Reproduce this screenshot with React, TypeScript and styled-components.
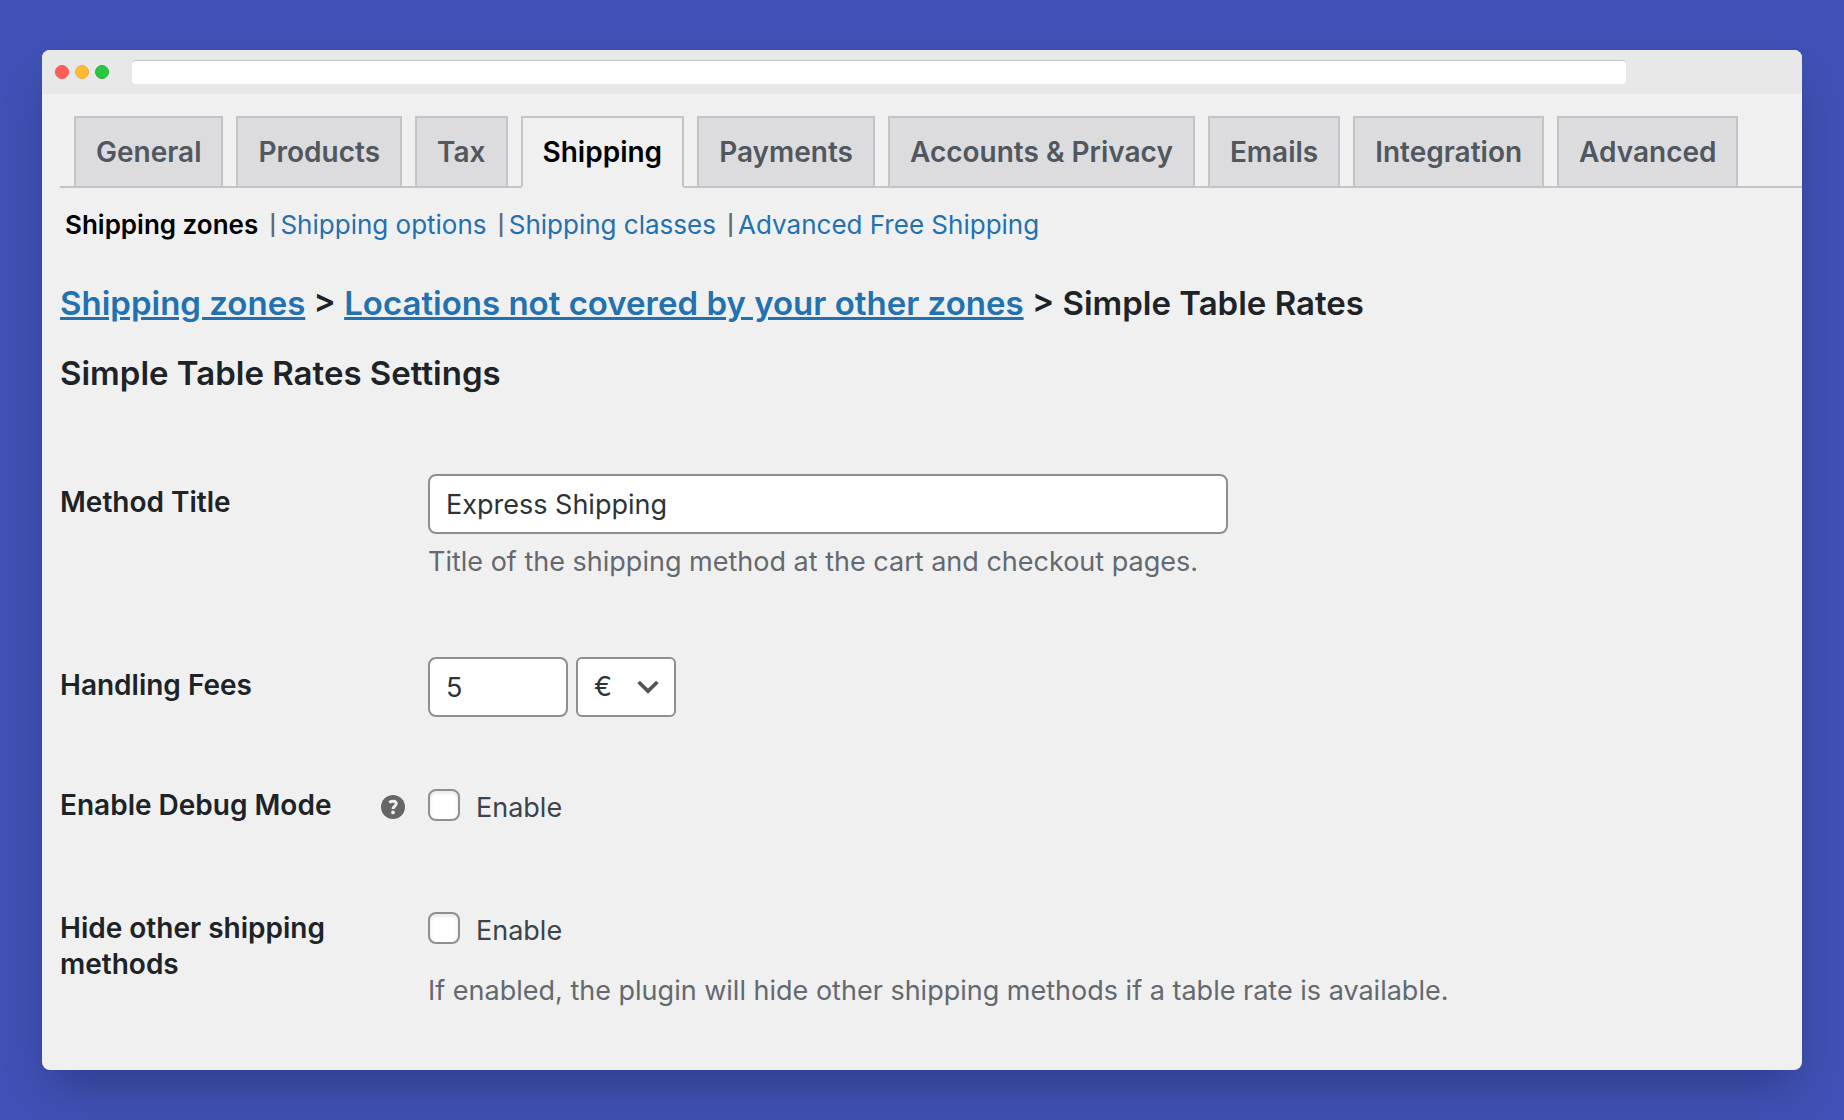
import React from "react";
import styled, { createGlobalStyle } from "styled-components";

const GlobalStyle = createGlobalStyle`
  *, *::before, *::after { box-sizing: border-box; }
  body {
    margin: 0;
    background: #3f51b5;
    color: #3c434a;
    font-family: Inter, "Liberation Sans", sans-serif;
    font-size: 27px;
    line-height: 36px;
  }
`;

const Page = styled.div`
  display: flex;
  min-height: 100vh;
  padding: 50px 42px;
`;

const BrowserWindow = styled.div`
  flex: 1;
  min-width: 0;
  overflow: hidden;
  border-radius: 8px;
  background: #f0f0f0;
  box-shadow: 0 24px 44px -8px rgba(0, 0, 0, 0.23);
`;

const TitleBar = styled.div`
  display: flex;
  align-items: center;
  height: 44px;
  padding: 0 176px 0 13px;
  background: #e8e8e8;
`;

const Lights = styled.div`
  display: flex;
  gap: 6px;
  margin-right: 23px;
`;

const Light = styled.span<{ $fill: string; $edge: string }>`
  width: 14px;
  height: 14px;
  border: 1px solid ${(p) => p.$edge};
  border-radius: 50%;
  background: ${(p) => p.$fill};
`;

const Address = styled.input`
  flex: 1;
  min-width: 0;
  height: 24px;
  padding: 0 8px;
  border: 0;
  border-top: 1px solid #c4c4c4;
  border-radius: 4px;
  background: #fff;
  outline: none;
`;

const Content = styled.main`
  padding: 22px 0 40px 18px;
`;

const Tabs = styled.nav`
  display: flex;
  gap: 13px;
  padding-left: 14px;
  border-bottom: 2px solid #c3c4c7;
`;

const Tab = styled.a<{ $active?: boolean }>`
  margin-bottom: -2px;
  padding: 17px 20px;
  border: 2px solid #c3c4c7;
  border-bottom-color: ${(p) => (p.$active ? "#f0f0f0" : "#c3c4c7")};
  background: ${(p) => (p.$active ? "#f0f0f0" : "#dcdcde")};
  color: ${(p) => (p.$active ? "#000" : "#50575e")};
  font-size: 28px;
  font-weight: 600;
  line-height: 34px;
  text-decoration: none;
  white-space: nowrap;
`;

const Sections = styled.ul`
  display: flex;
  margin: 19px 0 0;
  padding: 0 0 0 5px;
  list-style: none;
  color: #646970;
  font-size: 26px;
`;

const Section = styled.li`
  display: flex;
  & + &::before {
    content: "|";
    margin: 0 4px 0 11px;
    font-size: 20px;
    font-weight: 600;
  }
`;

const SectionLink = styled.a<{ $active?: boolean }>`
  color: ${(p) => (p.$active ? "#000" : "#2271b1")};
  font-weight: ${(p) => (p.$active ? 600 : 400)};
  text-decoration: none;
`;

const Heading = styled.h2`
  margin: 0 0 22px;
  color: #1d2327;
  font-size: 33px;
  font-weight: 600;
  line-height: 48px;
`;

const Crumbs = styled(Heading)`
  margin-top: 36px;
`;

const Crumb = styled.a`
  color: #2271b1;
`;

const Form = styled.form`
  display: grid;
  gap: 70px;
  padding-top: 55px;
`;

const Row = styled.div`
  display: grid;
  grid-template-columns: 345px minmax(0, 1fr);
  column-gap: 23px;
`;

const Head = styled.div<{ $inset?: boolean }>`
  display: flex;
  align-items: flex-start;
  justify-content: space-between;
  padding-top: ${(p) => (p.$inset ? 10 : 0)}px;
  color: #1d2327;
  font-size: 28px;
  font-weight: 600;
`;

const HeadLabel = styled.label`
  max-width: 290px;
`;

const Help = styled.button`
  display: flex;
  height: 40px;
  align-items: center;
  padding: 0;
  border: 0;
  background: none;
`;

const Field = styled.div`
  min-width: 0;
`;

const Controls = styled.div`
  display: flex;
  gap: 8px;
`;

const TextInput = styled.input<{ $width: number }>`
  width: ${(p) => p.$width}px;
  max-width: 100%;
  height: 60px;
  padding: 0 16px;
  border: 2px solid #8c8f94;
  border-radius: 8px;
  background: #fff;
  color: #2c3338;
  font: inherit;
`;

const SelectWrap = styled.div`
  display: grid;
  width: 100px;
  align-items: center;
  & > * { grid-area: 1 / 1; }
  & > svg {
    justify-self: end;
    margin-right: 17px;
    pointer-events: none;
  }
`;

const Select = styled.select`
  width: 100%;
  height: 60px;
  padding: 0 40px 0 16px;
  border: 2px solid #8c8f94;
  border-radius: 6px;
  appearance: none;
  background: #fff;
  color: #2c3338;
  font: inherit;
`;

const CheckLabel = styled.label`
  display: flex;
  width: fit-content;
  gap: 16px;
  margin-bottom: 13px;
  padding-top: 2px;
  line-height: 38px;
`;

const Checkbox = styled.input`
  width: 32px;
  height: 32px;
  margin: 0;
  border: 2px solid #8c8f94;
  border-radius: 8px;
  appearance: none;
  background: #fff;
  box-shadow: inset 0 2px 4px rgba(0, 0, 0, 0.1);
  &:checked { background: #2271b1; }
`;

const Description = styled.p<{ $top: number; $bottom?: number }>`
  margin: ${(p) => p.$top}px 0 ${(p) => p.$bottom ?? 0}px;
  color: #646970;
`;

const tabs = [
  "General", "Products", "Tax", "Shipping", "Payments",
  "Accounts & Privacy", "Emails", "Integration", "Advanced",
];
const sections = ["Shipping zones", "Shipping options", "Shipping classes", "Advanced Free Shipping"];

function HelpIcon() {
  return (
    <svg width="24" height="24" viewBox="0 0 24 24" aria-hidden="true">
      <circle cx="12" cy="12" r="12" fill="#666" />
      <path d="M8.2 7.4 C9.4 6.6 10.7 6.2 12.1 6.2 C14.1 6.2 15.2 7.2 15.2 8.7 C15.2 11.1 12 11.2 12 14" fill="none" stroke="#f0f0f0" strokeWidth="3" />
      <circle cx="12" cy="17.4" r="1.9" fill="#f0f0f0" />
    </svg>
  );
}

function Chevron() {
  return (
    <svg width="22" height="14" viewBox="0 0 22 14" aria-hidden="true">
      <path d="M1.6 2 L11 11 L20.4 2" fill="none" stroke="#555" strokeWidth="3.8" />
    </svg>
  );
}

export default function App() {
  return (
    <Page>
      <GlobalStyle />
      <BrowserWindow>
        <TitleBar>
          <Lights>
            <Light $fill="#ff5f57" $edge="#f25056" />
            <Light $fill="#febc2e" $edge="#e9ad3c" />
            <Light $fill="#28c840" $edge="#24ae3a" />
          </Lights>
          <Address type="text" aria-label="Address" />
        </TitleBar>
        <Content>
          <Tabs>
            {tabs.map((t) => (
              <Tab key={t} href="#" $active={t === "Shipping"}>{t}</Tab>
            ))}
          </Tabs>
          <Sections>
            {sections.map((s) => (
              <Section key={s}>
                <SectionLink href="#" $active={s === "Shipping zones"}>{s}</SectionLink>
              </Section>
            ))}
          </Sections>
          <Crumbs>
            <Crumb href="#">Shipping zones</Crumb> &gt;{" "}
            <Crumb href="#">Locations not covered by your other zones</Crumb> &gt; Simple Table Rates
          </Crumbs>
          <Heading>Simple Table Rates Settings</Heading>
          <Form>
            <Row>
              <Head $inset><HeadLabel htmlFor="title">Method Title</HeadLabel></Head>
              <Field>
                <TextInput id="title" type="text" defaultValue="Express Shipping" $width={800} />
                <Description $top={10} $bottom={7}>
                  Title of the shipping method at the cart and checkout pages.
                </Description>
              </Field>
            </Row>
            <Row>
              <Head $inset><HeadLabel htmlFor="fee">Handling Fees</HeadLabel></Head>
              <Controls>
                <TextInput id="fee" type="text" defaultValue="5" $width={140} />
                <SelectWrap>
                  <Select aria-label="Fee unit" defaultValue="€">
                    <option>€</option>
                    <option>%</option>
                  </Select>
                  <Chevron />
                </SelectWrap>
              </Controls>
            </Row>
            <Row>
              <Head>
                <HeadLabel htmlFor="debug">Enable Debug Mode</HeadLabel>
                <Help type="button" aria-label="Help"><HelpIcon /></Help>
              </Head>
              <Field>
                <CheckLabel><Checkbox id="debug" type="checkbox" />Enable</CheckLabel>
              </Field>
            </Row>
            <Row>
              <Head><HeadLabel htmlFor="hide">Hide other shipping methods</HeadLabel></Head>
              <Field>
                <CheckLabel><Checkbox id="hide" type="checkbox" />Enable</CheckLabel>
                <Description $top={23}>
                  If enabled, the plugin will hide other shipping methods if a table rate is available.
                </Description>
              </Field>
            </Row>
          </Form>
        </Content>
      </BrowserWindow>
    </Page>
  );
}
